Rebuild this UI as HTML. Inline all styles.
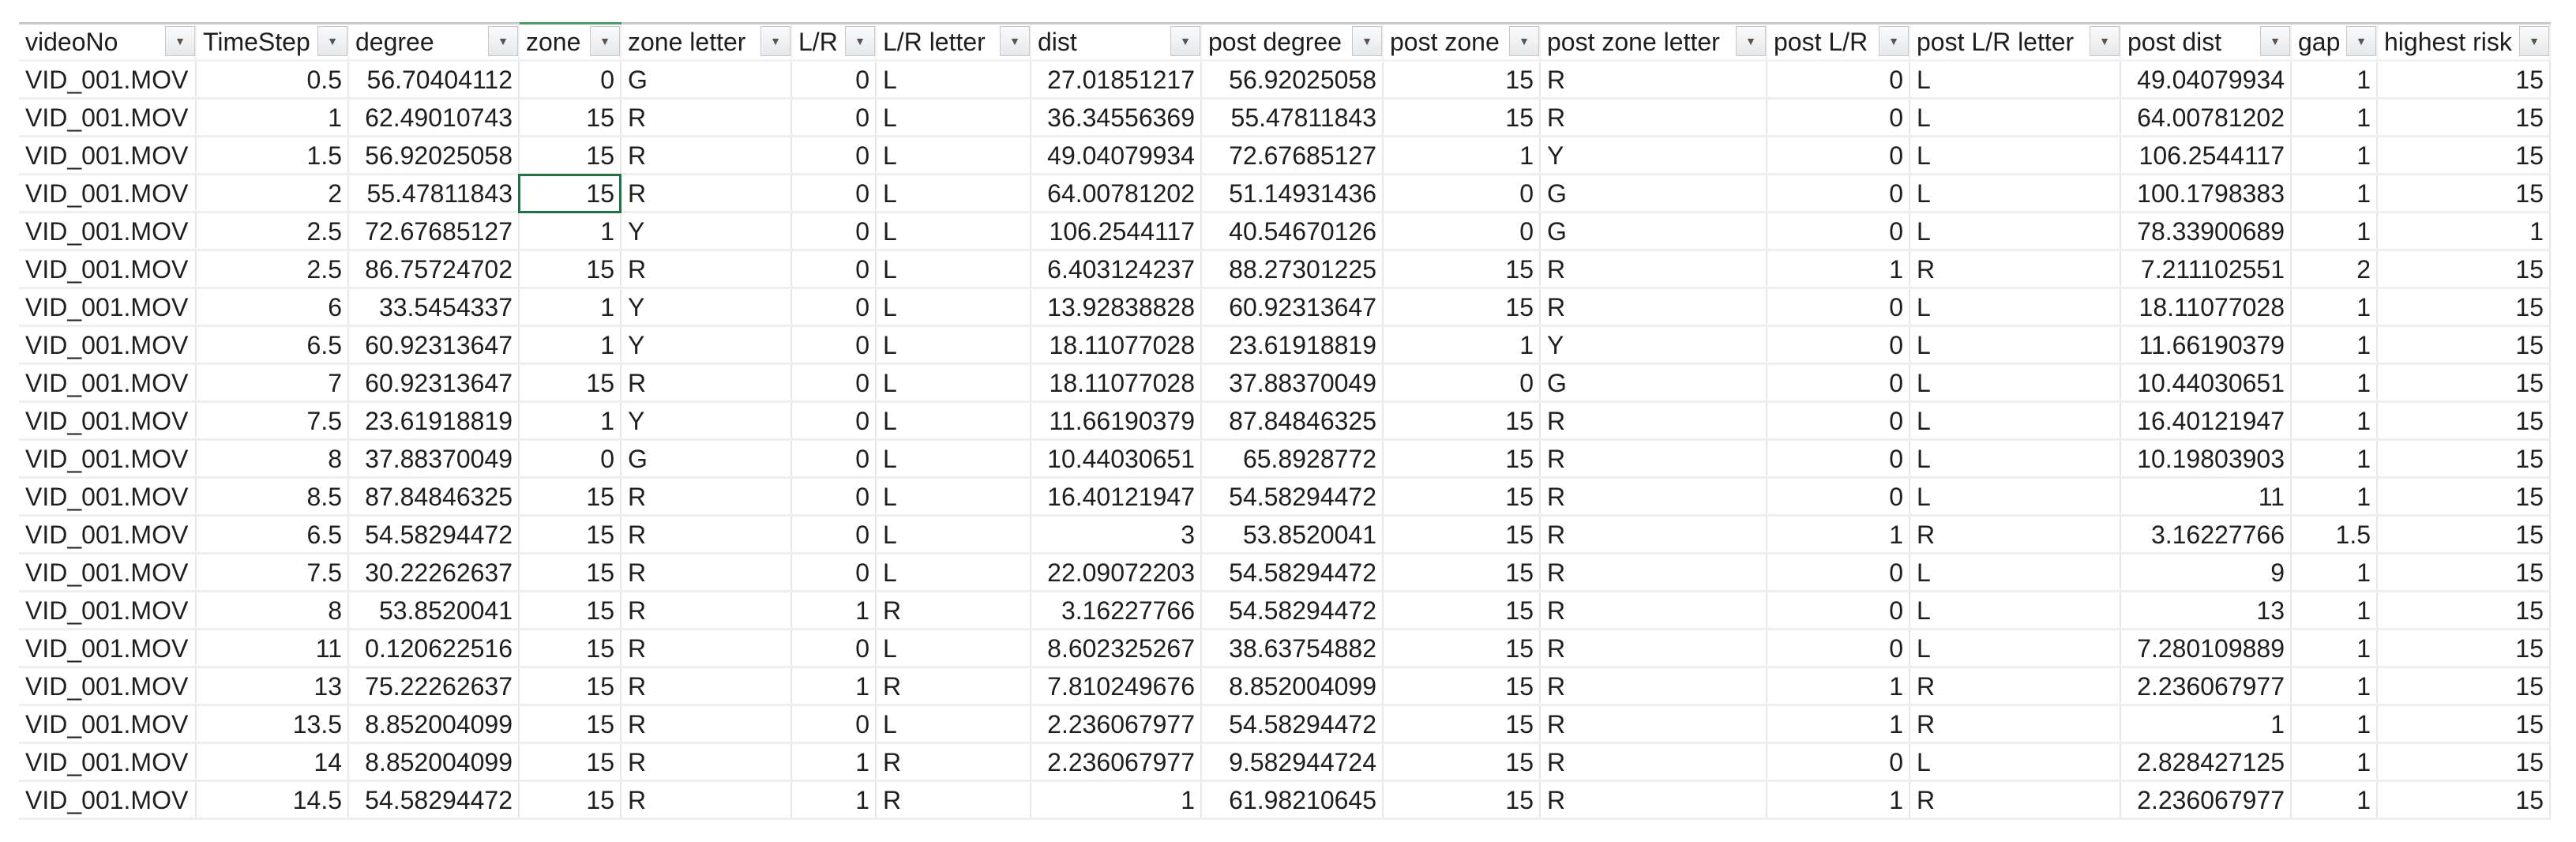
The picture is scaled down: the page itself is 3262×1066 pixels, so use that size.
<!DOCTYPE html>
<html><head><meta charset="utf-8">
<style>
html,body{margin:0;padding:0;background:#fff;width:3262px;height:1066px;overflow:hidden}
table{position:absolute;left:24px;top:28px;border-collapse:collapse;table-layout:fixed;font-family:"Liberation Sans",sans-serif;font-size:32px;color:#1e1e1e}
td{height:45px;padding:0 7px;white-space:nowrap;overflow:hidden;border-right:2px solid #e6e6e6;border-bottom:3px solid #eeeeee;text-align:right;line-height:44px}
td.l{text-align:left;padding-left:8px}
tr.h td{height:42px;border-top:3px solid #c8c8c8;text-align:left;padding-left:8px;position:relative;border-right:2px solid #f0f0f0;border-bottom:3px solid #f2f2f2}
tr.h td.g{border-top:3px solid #4f9a6c}
.b{position:absolute;right:0;top:2px;width:38px;height:38px;border:1px solid #c4c8cc;background:linear-gradient(#fafbfc,#e6e8ea);box-sizing:border-box;font-size:14px;line-height:36px;text-align:center;color:#555}
td.sel{outline:3px solid #217346;outline-offset:-2px}
</style></head><body>
<table>
<colgroup>
<col style="width:224px"><col style="width:193px"><col style="width:216px"><col style="width:129px"><col style="width:216px"><col style="width:107px"><col style="width:196px"><col style="width:216px"><col style="width:230px"><col style="width:199px"><col style="width:287px"><col style="width:181px"><col style="width:267px"><col style="width:216px"><col style="width:109px"><col style="width:219px">
</colgroup>
<tr class="h"><td>videoNo<span class="b">▼</span></td><td>TimeStep<span class="b">▼</span></td><td>degree<span class="b">▼</span></td><td class="g">zone<span class="b">▼</span></td><td>zone letter<span class="b">▼</span></td><td>L/R<span class="b">▼</span></td><td>L/R letter<span class="b">▼</span></td><td>dist<span class="b">▼</span></td><td>post degree<span class="b">▼</span></td><td>post zone<span class="b">▼</span></td><td>post zone letter<span class="b">▼</span></td><td>post L/R<span class="b">▼</span></td><td>post L/R letter<span class="b">▼</span></td><td>post dist<span class="b">▼</span></td><td>gap<span class="b">▼</span></td><td>highest risk<span class="b">▼</span></td></tr>
<tr><td class="l">VID_001.MOV</td><td>0.5</td><td>56.70404112</td><td>0</td><td class="l">G</td><td>0</td><td class="l">L</td><td>27.01851217</td><td>56.92025058</td><td>15</td><td class="l">R</td><td>0</td><td class="l">L</td><td>49.04079934</td><td>1</td><td>15</td></tr>
<tr><td class="l">VID_001.MOV</td><td>1</td><td>62.49010743</td><td>15</td><td class="l">R</td><td>0</td><td class="l">L</td><td>36.34556369</td><td>55.47811843</td><td>15</td><td class="l">R</td><td>0</td><td class="l">L</td><td>64.00781202</td><td>1</td><td>15</td></tr>
<tr><td class="l">VID_001.MOV</td><td>1.5</td><td>56.92025058</td><td>15</td><td class="l">R</td><td>0</td><td class="l">L</td><td>49.04079934</td><td>72.67685127</td><td>1</td><td class="l">Y</td><td>0</td><td class="l">L</td><td>106.2544117</td><td>1</td><td>15</td></tr>
<tr><td class="l">VID_001.MOV</td><td>2</td><td>55.47811843</td><td class="sel">15</td><td class="l">R</td><td>0</td><td class="l">L</td><td>64.00781202</td><td>51.14931436</td><td>0</td><td class="l">G</td><td>0</td><td class="l">L</td><td>100.1798383</td><td>1</td><td>15</td></tr>
<tr><td class="l">VID_001.MOV</td><td>2.5</td><td>72.67685127</td><td>1</td><td class="l">Y</td><td>0</td><td class="l">L</td><td>106.2544117</td><td>40.54670126</td><td>0</td><td class="l">G</td><td>0</td><td class="l">L</td><td>78.33900689</td><td>1</td><td>1</td></tr>
<tr><td class="l">VID_001.MOV</td><td>2.5</td><td>86.75724702</td><td>15</td><td class="l">R</td><td>0</td><td class="l">L</td><td>6.403124237</td><td>88.27301225</td><td>15</td><td class="l">R</td><td>1</td><td class="l">R</td><td>7.211102551</td><td>2</td><td>15</td></tr>
<tr><td class="l">VID_001.MOV</td><td>6</td><td>33.5454337</td><td>1</td><td class="l">Y</td><td>0</td><td class="l">L</td><td>13.92838828</td><td>60.92313647</td><td>15</td><td class="l">R</td><td>0</td><td class="l">L</td><td>18.11077028</td><td>1</td><td>15</td></tr>
<tr><td class="l">VID_001.MOV</td><td>6.5</td><td>60.92313647</td><td>1</td><td class="l">Y</td><td>0</td><td class="l">L</td><td>18.11077028</td><td>23.61918819</td><td>1</td><td class="l">Y</td><td>0</td><td class="l">L</td><td>11.66190379</td><td>1</td><td>15</td></tr>
<tr><td class="l">VID_001.MOV</td><td>7</td><td>60.92313647</td><td>15</td><td class="l">R</td><td>0</td><td class="l">L</td><td>18.11077028</td><td>37.88370049</td><td>0</td><td class="l">G</td><td>0</td><td class="l">L</td><td>10.44030651</td><td>1</td><td>15</td></tr>
<tr><td class="l">VID_001.MOV</td><td>7.5</td><td>23.61918819</td><td>1</td><td class="l">Y</td><td>0</td><td class="l">L</td><td>11.66190379</td><td>87.84846325</td><td>15</td><td class="l">R</td><td>0</td><td class="l">L</td><td>16.40121947</td><td>1</td><td>15</td></tr>
<tr><td class="l">VID_001.MOV</td><td>8</td><td>37.88370049</td><td>0</td><td class="l">G</td><td>0</td><td class="l">L</td><td>10.44030651</td><td>65.8928772</td><td>15</td><td class="l">R</td><td>0</td><td class="l">L</td><td>10.19803903</td><td>1</td><td>15</td></tr>
<tr><td class="l">VID_001.MOV</td><td>8.5</td><td>87.84846325</td><td>15</td><td class="l">R</td><td>0</td><td class="l">L</td><td>16.40121947</td><td>54.58294472</td><td>15</td><td class="l">R</td><td>0</td><td class="l">L</td><td>11</td><td>1</td><td>15</td></tr>
<tr><td class="l">VID_001.MOV</td><td>6.5</td><td>54.58294472</td><td>15</td><td class="l">R</td><td>0</td><td class="l">L</td><td>3</td><td>53.8520041</td><td>15</td><td class="l">R</td><td>1</td><td class="l">R</td><td>3.16227766</td><td>1.5</td><td>15</td></tr>
<tr><td class="l">VID_001.MOV</td><td>7.5</td><td>30.22262637</td><td>15</td><td class="l">R</td><td>0</td><td class="l">L</td><td>22.09072203</td><td>54.58294472</td><td>15</td><td class="l">R</td><td>0</td><td class="l">L</td><td>9</td><td>1</td><td>15</td></tr>
<tr><td class="l">VID_001.MOV</td><td>8</td><td>53.8520041</td><td>15</td><td class="l">R</td><td>1</td><td class="l">R</td><td>3.16227766</td><td>54.58294472</td><td>15</td><td class="l">R</td><td>0</td><td class="l">L</td><td>13</td><td>1</td><td>15</td></tr>
<tr><td class="l">VID_001.MOV</td><td>11</td><td>0.120622516</td><td>15</td><td class="l">R</td><td>0</td><td class="l">L</td><td>8.602325267</td><td>38.63754882</td><td>15</td><td class="l">R</td><td>0</td><td class="l">L</td><td>7.280109889</td><td>1</td><td>15</td></tr>
<tr><td class="l">VID_001.MOV</td><td>13</td><td>75.22262637</td><td>15</td><td class="l">R</td><td>1</td><td class="l">R</td><td>7.810249676</td><td>8.852004099</td><td>15</td><td class="l">R</td><td>1</td><td class="l">R</td><td>2.236067977</td><td>1</td><td>15</td></tr>
<tr><td class="l">VID_001.MOV</td><td>13.5</td><td>8.852004099</td><td>15</td><td class="l">R</td><td>0</td><td class="l">L</td><td>2.236067977</td><td>54.58294472</td><td>15</td><td class="l">R</td><td>1</td><td class="l">R</td><td>1</td><td>1</td><td>15</td></tr>
<tr><td class="l">VID_001.MOV</td><td>14</td><td>8.852004099</td><td>15</td><td class="l">R</td><td>1</td><td class="l">R</td><td>2.236067977</td><td>9.582944724</td><td>15</td><td class="l">R</td><td>0</td><td class="l">L</td><td>2.828427125</td><td>1</td><td>15</td></tr>
<tr><td class="l">VID_001.MOV</td><td>14.5</td><td>54.58294472</td><td>15</td><td class="l">R</td><td>1</td><td class="l">R</td><td>1</td><td>61.98210645</td><td>15</td><td class="l">R</td><td>1</td><td class="l">R</td><td>2.236067977</td><td>1</td><td>15</td></tr>
</table>
</body></html>
